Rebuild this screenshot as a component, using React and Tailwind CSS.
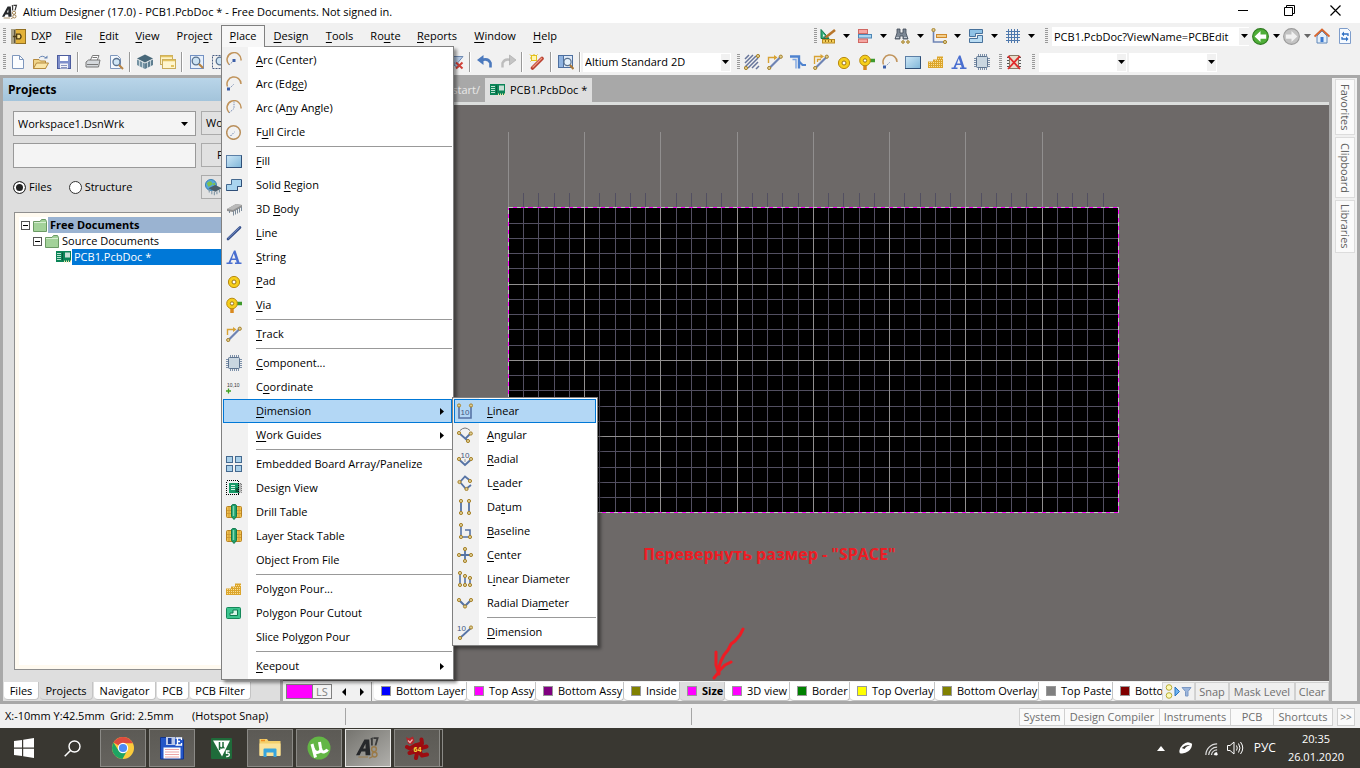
import React from "react";

/* ---------- small helpers ---------- */

function Mnemonic({ text }) {
  const at = text.indexOf("_");
  if (at < 0) return <span>{text}</span>;
  return (
    <span>
      {text.slice(0, at)}
      <u className="underline underline-offset-2 decoration-1">{text[at + 1]}</u>
      {text.slice(at + 2)}
    </span>
  );
}

function Svg({ children, size = "size-4", box = "0 0 16 16", className = "" }) {
  return (
    <svg viewBox={box} className={`${size} shrink-0 ${className}`} fill="none" aria-hidden="true">
      {children}
    </svg>
  );
}

const Caret = ({ color = "#000" }) => (
  <svg viewBox="0 0 7 4" className="h-1 w-[7px] shrink-0" aria-hidden="true">
    <path d="M0 0H7L3.5 4Z" fill={color} />
  </svg>
);

const N = ({ x, y, r = 1.6 }) => <circle cx={x} cy={y} r={r} fill="#dccb8f" stroke="#a8832c" />;
const ST = "#5673a5";

/* ---------- icons ---------- */

const icons = {
  arcCenter: (
    <Svg>
      <path d="M3 12.500A7 7 0 1 1 15 8.500" stroke="#c0935a" strokeWidth="1.500" />
      <path d="M3 13L7.500 9" stroke="#7b8fb5" strokeDasharray="1.5 1" />
      <rect x="6.500" y="7" width="3" height="3" fill="#3c5fa8" />
    </Svg>
  ),
  arcEdge: (
    <Svg>
      <path d="M1.500 10.500A7 7 0 1 1 15 8" stroke="#c0935a" strokeWidth="1.500" />
      <path d="M3 13L8 8" stroke="#7b8fb5" strokeDasharray="1.5 1" />
      <rect x="1" y="11.500" width="3" height="3" fill="#3c5fa8" />
    </Svg>
  ),
  arcAny: (
    <Svg>
      <path d="M3 12.500A7 7 0 1 1 15 8.500" stroke="#c0935a" strokeWidth="1.500" />
      <path d="M3 13L8 8.500V1.500" stroke="#7b8fb5" strokeDasharray="1.5 1" />
    </Svg>
  ),
  circle: (
    <Svg>
      <circle cx="7.500" cy="8.500" r="6.800" stroke="#b98f5b" strokeWidth="1.500" />
      <path d="M4.500 12L8.500 8" stroke="#5d76a8" strokeDasharray="1.5 1" />
    </Svg>
  ),
  fill: (
    <Svg>
      <defs>
        <linearGradient id="gFill" x1="0" y1="0" x2="1" y2="1">
          <stop offset="0" stopColor="#cfe8f7" />
          <stop offset="1" stopColor="#7fb6d9" />
        </linearGradient>
      </defs>
      <rect x=".5" y="2.500" width="15" height="12" fill="url(#gFill)" stroke="#5c7fa6" />
      <path d="M0 14.500H15.500V2.500" stroke="#2f4f78" />
    </Svg>
  ),
  region: (
    <Svg>
      <path d="M5.500 2.500H15.500V9.500H11.500V13.500H.5V7.500H5.500Z" fill="#a9d4ee" stroke="#44698f" />
      <path d="M.5 13.500H11.500V9.500H15.500V3" stroke="#2f4f78" />
    </Svg>
  ),
  body: (
    <Svg>
      <path d="M1 8L10 3L16 4V6L7 11L1 10Z" fill="#8f8f8f" />
      <path d="M1 8L10 3L16 4L7 9Z" fill="#b9b9b9" />
      <path d="M7.500 10V14.500M9.500 9V13.500M11.500 8V12.500M13.500 7V11.500M15.500 6V10M3.500 10V12" stroke="#7d8c9a" />
    </Svg>
  ),
  line: (
    <Svg>
      <path d="M2 14L14 2.500" stroke="#35508c" strokeWidth="2.600" strokeLinecap="round" />
      <path d="M2 13.500L13.500 2.500" stroke="#8aa0d0" strokeWidth=".8" />
    </Svg>
  ),
  string: (
    <Svg>
      <path
        fillRule="evenodd"
        d="M8 1.500H9.500L13.500 13.500H15.500V15H9V13.500H10.700L10 11H5.500L4.500 13.500H6.500V15H.5V13.500H2.500ZM7.700 4.500L6 9.500H9.500Z"
        fill="#4a6fd0"
      />
    </Svg>
  ),
  pad: (
    <Svg>
      <circle cx="8" cy="9" r="5.600" fill="#f6cf1b" stroke="#b98a10" />
      <circle cx="8" cy="9" r="2" fill="#fff" stroke="#9a7412" />
    </Svg>
  ),
  via: (
    <Svg>
      <path d="M10 6.500H16" stroke="#3f9a2c" strokeWidth="3.500" />
      <path d="M6 10V16" stroke="#d9891e" strokeWidth="3.500" />
      <circle cx="6" cy="6.500" r="5.300" fill="#f6cf1b" stroke="#b98a10" />
      <circle cx="6" cy="6.500" r="1.700" fill="#fff" stroke="#9a7412" />
    </Svg>
  ),
  track: (
    <Svg>
      <path d="M1.500 9V3.500H8.500" stroke="#d8a233" strokeWidth="1.400" />
      <path d="M7 1L10.500 3.500L7 6Z" fill="#d8a233" />
      <path d="M2.500 14L13.500 3" stroke="#6e84b4" strokeWidth="2.200" />
      <N x={13.8} y={2.7} />
      <N x={2.2} y={14} />
    </Svg>
  ),
  multi: (
    <Svg>
      <path d="M1.500 10V2.500H8M4.500 8V5.500H8" stroke="#d8a233" strokeWidth="1.300" />
      <path d="M7.500 0L11 2.500L7.500 5Z" fill="#d8a233" />
      <path d="M2.500 14L13.500 3" stroke="#6e84b4" strokeWidth="2.200" />
      <N x={13.8} y={2.7} />
      <N x={2.2} y={14} />
    </Svg>
  ),
  diff: (
    <Svg>
      <path d="M0 2.500H9V14.500" stroke="#4f83cf" strokeWidth="2.400" />
      <path d="M2.500 5.500H6V14.500" stroke="#7ea6e2" strokeWidth="1.400" />
      <path d="M9 7.500L12.500 11H16" stroke="#4f83cf" strokeWidth="2.200" />
    </Svg>
  ),
  hatch: (
    <Svg>
      <path d="M1 5L5 1M1 9L9 1M1 13L12 2M4 14L14 4M8 14L14 8M12 15L15 12" stroke="#66749a" strokeWidth="1.500" />
      <N x={14} y={2} />
      <N x={2} y={14} />
    </Svg>
  ),
  chip: (
    <Svg>
      <path
        d="M4.500 0V16M6.500 0V16M8.500 0V16M10.500 0V16M12.500 0V16M0 4.500H16M0 6.500H16M0 8.500H16M0 10.500H16M0 12.500H16"
        stroke="#6e84a0"
        strokeWidth=".9"
      />
      <rect x="2.500" y="2.500" width="11" height="11" rx="1" fill="#c9d6e0" stroke="#5f7590" />
    </Svg>
  ),
  coord: (
    <Svg>
      <path d="M0 12H5M2.500 9.500V14.500" stroke="#3fa320" strokeWidth="1.300" />
      <text x="1" y="8" fontSize="5" fontFamily="Liberation Sans, sans-serif" fill="#333">
        10,10
      </text>
    </Svg>
  ),
  array: (
    <Svg>
      {[
        [0.5, 0.5],
        [9.5, 0.5],
        [0.5, 9.5],
        [9.5, 9.5],
      ].map(([x, y]) => (
        <rect key={`${x}-${y}`} x={x} y={y} width="6" height="6" fill="#a9d0ea" stroke="#44698f" />
      ))}
    </Svg>
  ),
  designView: (
    <Svg>
      <rect x="12" y="3.500" width="3.500" height="9" fill="#b5b5b5" stroke="#777" strokeDasharray="1 1" />
      <rect x="3" y="3" width="10" height="10" fill="#199a68" />
      <path d="M5 5.500H9M5 7.500H9M5 9.500H9" stroke="#d5f0e4" />
      <rect x="9.500" y="8" width="3" height="4" fill="#0c5c3d" />
      <rect x=".5" y=".5" width="12" height="14" stroke="#000" strokeDasharray="1 1" shapeRendering="crispEdges" />
    </Svg>
  ),
  drill: (
    <Svg>
      <rect x=".5" y="2.500" width="15" height="11" rx="1" fill="#f0c04c" stroke="#b98323" />
      <path d="M1 6.500H15M1 9.500H15M3 3V13M13 3V13" stroke="#d09a34" />
      <path d="M5.500 1.500Q5.500 .5 8 .5T10.500 1.500V12.500L8 15.500L5.500 12.500Z" fill="#22a06b" stroke="#107a4c" />
      <path d="M7.500 2V12" stroke="#7ed8ae" strokeWidth="1.500" />
    </Svg>
  ),
  poly: (
    <Svg>
      <path d="M9 2.500H15V14H0V7.500H5V5.500H9Z" fill="#dca52c" />
      <path
        d="M1 8.500H15M1 10.500H15M1 12.500H15M7 6.500H15M10 4.500H15"
        stroke="#f8df96"
        strokeDasharray="1 1"
        shapeRendering="crispEdges"
      />
    </Svg>
  ),
  cutout: (
    <Svg>
      <rect x=".5" y="2.500" width="14" height="11" rx="1" fill="#3cc48e" stroke="#15885a" />
      <path d="M7 5H11.500V10.500H4V8H7Z" fill="#d8f5e8" stroke="#0f7a50" />
    </Svg>
  ),
  dLinear: (
    <Svg>
      <path d="M2 3V15H14V3" stroke={ST} strokeWidth="1.600" />
      <text x="3.500" y="12" fontSize="8" fontFamily="Liberation Sans, sans-serif" fill="#3f567f">
        10
      </text>
      <N x={2} y={2.5} />
      <N x={14} y={2.5} />
    </Svg>
  ),
  dAngular: (
    <Svg>
      <path d="M3 3.500Q8 -1.500 13 3.500" stroke="#777" />
      <path d="M2 6L10.500 13.500M9 11L14 6" stroke={ST} strokeWidth="1.800" />
      <N x={2} y={6} />
      <N x={13.8} y={6.5} />
      <N x={11} y={14} />
    </Svg>
  ),
  dRadial: (
    <Svg>
      <text x="3.500" y="6.500" fontSize="8" fontFamily="Liberation Sans, sans-serif" fill="#3f567f">
        10
      </text>
      <path d="M2 8.500L8 14L14 8.500" stroke={ST} strokeWidth="2" />
      <path d="M8 11V8" stroke="#999" />
      <N x={2} y={8} />
      <N x={14} y={8} />
    </Svg>
  ),
  dLeader: (
    <Svg>
      <path d="M13 5.500L8 1.500L3 7L9 14L14 10" stroke={ST} strokeWidth="1.800" />
      <N x={13} y={6} />
      <N x={2.5} y={7} />
      <N x={9.5} y={14} />
    </Svg>
  ),
  dDatum: (
    <Svg>
      <path d="M4 2V14M12 2V14" stroke={ST} strokeWidth="1.800" />
      <N x={4} y={2} />
      <N x={4} y={14} />
      <N x={12} y={2} />
      <N x={12} y={14} />
    </Svg>
  ),
  dBase: (
    <Svg>
      <path d="M4 2V14H13V7H8" stroke={ST} strokeWidth="1.600" />
      <N x={4} y={2} />
      <N x={4} y={14} />
      <N x={13} y={14} />
    </Svg>
  ),
  dCenter: (
    <Svg>
      <path d="M8 2V14M2 8H14" stroke={ST} strokeWidth="1.800" />
      <N x={8} y={2} />
      <N x={8} y={14} />
      <N x={2} y={8} />
      <N x={14} y={8} />
    </Svg>
  ),
  dLinDia: (
    <Svg>
      <path d="M3 2V14M8 5V14M13 8V14" stroke={ST} strokeWidth="1.600" />
      <N x={3} y={2} />
      <N x={3} y={14} />
      <N x={8} y={5} />
      <N x={8} y={14} />
      <N x={13} y={7} />
      <N x={13} y={14} />
    </Svg>
  ),
  dRadDia: (
    <Svg>
      <path d="M2 5L8 11L14 5" stroke={ST} strokeWidth="2" />
      <N x={2} y={5} />
      <N x={14} y={5} />
      <N x={8} y={11.5} />
    </Svg>
  ),
  dDim: (
    <Svg>
      <text x="0" y="6.500" fontSize="8" fontFamily="Liberation Sans, sans-serif" fill="#3f567f">
        10
      </text>
      <path d="M3 14L14 4" stroke={ST} strokeWidth="1.800" />
      <N x={14} y={3.5} />
      <N x={3} y={14} />
    </Svg>
  ),
  newDoc: (
    <Svg>
      <path d="M2.500 1.500H9.500L13.500 5.500V14.500H2.500Z" fill="#fbfdff" stroke="#7e97bd" />
      <path d="M9.500 1.500V5.500H13.500" stroke="#7e97bd" />
    </Svg>
  ),
  open: (
    <Svg>
      <path d="M.5 14.500V5.500H6L7.500 7H12.500V14.500Z" fill="#f0d488" stroke="#b58a3e" />
      <path d="M.5 14.500L3.500 9H15.500L12.500 14.500Z" fill="#fae6a8" stroke="#b58a3e" />
      <path d="M6 4Q9 .5 13 4" stroke="#6a87b5" />
      <path d="M11 4.500H14.500V1.500Z" fill="#6a87b5" />
    </Svg>
  ),
  save: (
    <Svg>
      <rect x="1.500" y="1.500" width="13" height="13" fill="#7f8fcb" stroke="#4c5c9e" />
      <rect x="4" y="2" width="8" height="5" fill="#fff" />
      <rect x="4" y="9.500" width="8" height="5" fill="#f3f3f8" />
      <path d="M5 11.500H11M5 13.500H11" stroke="#8a95bf" />
    </Svg>
  ),
  print: (
    <Svg>
      <path d="M5 7L7.500 1.500H14L12 7" fill="#fff" stroke="#7a7a7a" />
      <path d="M1 8L3.500 6H15L13.500 13H1Z" fill="#d4d8dc" stroke="#777" />
      <path d="M2 10.500H13M7.500 3.500H12" stroke="#777" />
    </Svg>
  ),
  preview: (
    <Svg>
      <path d="M2.500 1.500H9.500L12.500 4.500V14.500H2.500Z" fill="#f4f8fd" stroke="#7e97bd" />
      <circle cx="8.500" cy="8" r="3.500" fill="#cfe5f5" stroke="#58718f" strokeWidth="1.300" />
      <path d="M11 11L15 15" stroke="#b88444" strokeWidth="2" />
    </Svg>
  ),
  stack: (
    <Svg>
      <path d="M8 .5L16 4.500L8 8.500L0 4.500Z" fill="#476779" />
      <path d="M0 5.500L8 9.500V15L0 11Z" fill="#7593a3" />
      <path d="M16 5.500L8 9.500V15L16 11Z" fill="#5e7e90" />
      <path d="M2.500 6V13M5.500 7.500V14M10.500 7.500V14M13.500 6V13" stroke="#d5e2e9" strokeWidth=".8" />
    </Svg>
  ),
  windows: (
    <Svg>
      <rect x=".5" y="1.500" width="12" height="9" fill="#fdf3c7" stroke="#c9ac5c" />
      <path d="M1 2.500H12.500" stroke="#e3c25f" strokeWidth="1.500" />
      <rect x="2.500" y="5.500" width="13" height="9" fill="#fff6cf" stroke="#c9ac5c" />
      <path d="M3 6.500H15" stroke="#e3c25f" strokeWidth="1.500" />
      <rect x="11" y="11" width="3" height="2" fill="#e3c25f" />
    </Svg>
  ),
  zoomDoc: (
    <Svg>
      <rect x="1.500" y="1.500" width="13" height="13" fill="#e7f0fb" stroke="#7391c2" />
      <circle cx="7" cy="7" r="3.800" fill="#cbe2f3" stroke="#58718f" strokeWidth="1.300" />
      <path d="M10 10L14 14" stroke="#b88444" strokeWidth="2.200" />
    </Svg>
  ),
  zoomArea: (
    <Svg>
      <rect x=".5" y="1.500" width="14" height="13" stroke="#4a5e84" strokeDasharray="2 1" />
      <circle cx="8" cy="7" r="3.800" fill="#cbe2f3" stroke="#58718f" strokeWidth="1.300" />
      <path d="M11 10L15 14" stroke="#b88444" strokeWidth="2.200" />
    </Svg>
  ),
  clearFilter: (
    <Svg>
      <path d="M1 2.500H15L10 8.500V14L6 11V8.500Z" fill="#b7cbe6" stroke="#6e8ab3" />
      <path d="M8 8.500L14.500 14.500M14.500 8.500L8 14.500" stroke="#cf4037" strokeWidth="2" />
    </Svg>
  ),
  undo: (
    <Svg>
      <path d="M4 6.500Q11 3.500 13.500 9V13.500" stroke="#4b79bd" strokeWidth="2.600" />
      <path d="M0 6L6.500 1V11Z" fill="#4b79bd" />
    </Svg>
  ),
  redo: (
    <Svg>
      <path d="M12 6.500Q5 3.500 2.500 9V13.500" stroke="#bdbdbd" strokeWidth="2.400" />
      <path d="M16 6L9.500 1V11Z" fill="#c4c4c4" stroke="#a5a5a5" strokeWidth=".6" />
    </Svg>
  ),
  wand: (
    <Svg>
      <path d="M3.500 14L13 4.500" stroke="#b93f2f" strokeWidth="3.600" strokeLinecap="round" />
      <path d="M3.500 13.500L13 4" stroke="#ee9a83" strokeWidth="1.200" />
      <rect x="2.500" y="1.500" width="5" height="5" fill="#fff7b0" stroke="#e6c21c" />
      <path d="M5 0V1.500M1 4H2.500M1 .5L2.500 2M8.500 .5L7.500 1.500M1.500 7.500L2.500 6.500" stroke="#d9b512" />
    </Svg>
  ),
  browse: (
    <Svg>
      <rect x=".5" y="1.500" width="5" height="12" fill="#8fb3e0" stroke="#4d6f9f" />
      <rect x="5.500" y="1.500" width="9" height="12" fill="#dfe9f6" stroke="#4d6f9f" />
      <circle cx="9.500" cy="8" r="3.600" fill="#e6f2fb" stroke="#58718f" strokeWidth="1.200" />
      <path d="M12 11L15.500 15" stroke="#a97838" strokeWidth="2.200" />
    </Svg>
  ),
  chipX: (
    <Svg>
      <path d="M1 3.500H15M1 6.500H15M1 9.500H15M1 12.500H15" stroke="#555" />
      <rect x="3.500" y="1.500" width="9" height="13" fill="#e8dccb" stroke="#8a7a66" />
      <path d="M2 2L14 15M14 2L2 15" stroke="#e12b2b" strokeWidth="1.800" />
    </Svg>
  ),
  ruler: (
    <Svg>
      <path d="M1 1.500V10.500H9Z" fill="#37b07c" stroke="#127a4c" />
      <path d="M3 6V8.500H5.500Z" fill="#f1f1f1" />
      <path d="M5.500 9.500L15 2" stroke="#b8762a" strokeWidth="2.600" />
      <path d="M3.500 10.500L5.500 8" stroke="#555" />
      <rect x="2.500" y="11.500" width="12" height="3.500" fill="#f3ce5b" stroke="#b98a21" />
      <path d="M5.500 12V14M8.500 12V14M11.500 12V14" stroke="#9a6f14" />
    </Svg>
  ),
  align: (
    <Svg>
      <rect x="1.500" y="1.500" width="9" height="4" fill="#f5a6a2" stroke="#d06863" />
      <rect x="1.500" y="6.500" width="13" height="3.500" fill="#a9d4f0" stroke="#4d86b5" />
      <rect x="1.500" y="11" width="9" height="3.500" fill="#f5a6a2" stroke="#d06863" />
    </Svg>
  ),
  binoculars: (
    <Svg>
      <path d="M3 1H6V5H9V1H12V5L14 11H9V8H6V11H1L3 5Z" fill="#7d8894" stroke="#3c4654" strokeWidth=".8" />
      <path d="M2 9.500H5M10 9.500H13" stroke="#c5ccd4" />
      <N x={9} y={14} r={1.3} />
      <N x={14} y={14} r={1.3} />
    </Svg>
  ),
  dimTool: (
    <Svg>
      <path d="M2.500 2V14H14" stroke="#6e84b4" strokeWidth="1.600" />
      <rect x="5.500" y="6.500" width="10" height="3" fill="#f3ce8b" stroke="#cf8a2c" />
      <N x={2.5} y={2} />
      <N x={14} y={14} />
    </Svg>
  ),
  rooms: (
    <Svg>
      <path d="M1.500 1.500H14.500V5.500H7.500V8.500H1.500Z" fill="#8fc2e6" stroke="#47719b" />
      <path d="M14.500 7.500V14.500H1.500V10.500H9.500V7.500Z" fill="#b9dcf3" stroke="#47719b" />
    </Svg>
  ),
  grid: (
    <Svg>
      <path d="M1 3.500H15M1 6.500H15M1 9.500H15M1 12.500H15M3.500 1V15M6.500 1V15M9.500 1V15M12.500 1V15" stroke="#4f79ad" />
    </Svg>
  ),
  back: (
    <Svg size="size-[17px]">
      <circle cx="8" cy="8" r="7.400" fill="#4fae38" stroke="#2d7a1e" />
      <path d="M2.500 8L8 2.800V6H13.300V10H8V13.200Z" fill="#fff" />
    </Svg>
  ),
  forward: (
    <Svg size="size-[17px]">
      <circle cx="8" cy="8" r="7.400" fill="#c3c3c3" stroke="#9b9b9b" />
      <path d="M13.500 8L8 2.800V6H2.700V10H8V13.200Z" fill="#f1f1f1" />
    </Svg>
  ),
  home: (
    <Svg>
      <path d="M3 8V15H13V8L8 3Z" fill="#e3effa" stroke="#5f86b8" />
      <path d="M.5 8.500L8 1.500L15.500 8.500" stroke="#d8652d" strokeWidth="1.800" />
      <rect x="6.500" y="9" width="3" height="5" fill="#3b79cf" />
    </Svg>
  ),
  refresh: (
    <Svg>
      <path d="M2.500 .5H10.500L13.500 3.500V15.500H2.500Z" fill="#f5faff" stroke="#7e9dcb" />
      <path d="M6 6H11V8M10 11H5V9" stroke="#2e70c4" strokeWidth="1.300" />
      <path d="M7 3.500V8.500L4.500 6ZM9 8.500V13.500L11.500 11Z" fill="#2e70c4" />
    </Svg>
  ),
  pcb: (
    <Svg>
      <rect x="0" y="2" width="15" height="11" fill="#0b8457" />
      <rect x="6" y="3.500" width="1" height="8" fill="#0a5c3c" />
      <rect x="9" y="3.500" width="5" height="5" fill="#c8dfd5" />
      <path d="M1 4.500H5M1 6.500H5M1 8.500H5M1 10.500H5" stroke="#cfeee0" strokeWidth=".9" />
      <path d="M8 12.500H15" stroke="#f3e7ae" strokeDasharray="1 1" strokeWidth="2" />
    </Svg>
  ),
};

function GlobeChip() {
  return (
    <Svg size="size-[17px]" box="0 0 20 20">
      <circle cx="7" cy="7" r="6.500" fill="#54a6dc" stroke="#2d79ad" />
      <path d="M2 5Q6 1 8 4T4 9ZM8 6L12 4V8Z" fill="#7cc04f" />
      <path d="M12 7L20 11L12 15L4 11Z" fill="#4a5d6b" />
      <path d="M5 12V16M8 14V18M11 15V19M14 14.500V18M17 13V16" stroke="#8096a5" strokeWidth="1.300" />
    </Svg>
  );
}

function Folder() {
  return (
    <Svg size="h-[13px] w-[15px]" box="0 0 15 13">
      <path d="M.5 12.500V2.500H7L8.500 .5H12.500L13.500 2.500V12.500Z" fill="#a3d29a" stroke="#6a9a64" />
      <path d="M1 3.500H13" stroke="#d7efd2" />
    </Svg>
  );
}

function AltiumMark({ className = "" }) {
  return (
    <svg viewBox="0 0 20 20" className={className} aria-hidden="true">
      <path fillRule="evenodd" d="M0 16L7 3H11L12 16H8L7.800 13H4.500L3 16ZM6 10.500H8L7.900 6.500Z" fill="#26282b" />
      <path d="M12 2L14 1V8H12.500V3.500ZM14.500 1H19L17 8H15.500L17 2.500H14.500Z" fill="#3a3a3a" />
      <circle cx="15" cy="11" r="2" fill="none" stroke="#9a7a48" strokeWidth="1.200" />
      <circle cx="15.500" cy="15.500" r="2" fill="none" stroke="#9a7a48" strokeWidth="1.200" />
      <path d="M2 17.500H10M11 18.500L14 17" stroke="#9a7a48" />
    </svg>
  );
}

/* ---------- toolbars ---------- */

const Handle = () => (
  <svg viewBox="0 0 3 16" className="h-4 w-[3px] shrink-0" shapeRendering="crispEdges" aria-hidden="true">
    <path d="M1.500 0V16" stroke="#999" strokeWidth="3" strokeDasharray="1 1" />
  </svg>
);
const Sep = () => <span className="mx-[2px] h-5 w-[2px] shrink-0 border-r border-l border-r-white border-l-[#999]" />;

function Tool({ name, label }) {
  return (
    <button type="button" aria-label={label || name} className="flex h-6 w-[23px] shrink-0 items-center justify-center">
      {icons[name]}
    </button>
  );
}

function DropTool({ name, label }) {
  return (
    <button type="button" aria-label={label || name} className="flex h-6 w-[37px] shrink-0 items-center gap-[7px] pl-[3px]">
      {icons[name]}
      <Caret />
    </button>
  );
}

function Combo({ label, value, width }) {
  return (
    <span className={`relative flex h-[19px] shrink-0 items-center bg-white ${width}`}>
      <select aria-label={label} className="h-full w-full appearance-none bg-transparent pl-[2px] outline-none" defaultValue={value}>
        <option>{value}</option>
      </select>
      <span className="pointer-events-none absolute inset-y-px right-px flex w-[9px] items-center justify-center bg-[#f1f1f1]">
        <Caret />
      </span>
    </span>
  );
}

const placeMenu = [
  { t: "_Arc (Center)", i: "arcCenter" },
  { t: "Arc (Edg_e)", i: "arcEdge" },
  { t: "Arc (A_ny Angle)", i: "arcAny" },
  { t: "F_ull Circle", i: "circle" },
  null,
  { t: "_Fill", i: "fill" },
  { t: "Solid _Region", i: "region" },
  { t: "3D _Body", i: "body" },
  { t: "_Line", i: "line" },
  { t: "_String", i: "string" },
  { t: "_Pad", i: "pad" },
  { t: "_Via", i: "via" },
  null,
  { t: "_Track", i: "track" },
  null,
  { t: "_Component...", i: "chip" },
  { t: "C_oordinate", i: "coord" },
  {
    t: "_Dimension",
    active: true,
    sub: [
      { t: "_Linear", i: "dLinear", active: true },
      { t: "_Angular", i: "dAngular" },
      { t: "_Radial", i: "dRadial" },
      { t: "L_eader", i: "dLeader" },
      { t: "Da_tum", i: "dDatum" },
      { t: "_Baseline", i: "dBase" },
      { t: "_Center", i: "dCenter" },
      { t: "L_inear Diameter", i: "dLinDia" },
      { t: "Radial Dia_meter", i: "dRadDia" },
      null,
      { t: "_Dimension", i: "dDim" },
    ],
  },
  { t: "_Work Guides", more: true },
  null,
  { t: "Embedded Board Array/Panelize", i: "array" },
  { t: "Design View", i: "designView" },
  { t: "Drill Table", i: "drill" },
  { t: "Layer Stack Table", i: "drill" },
  { t: "Object From File" },
  null,
  { t: "Poly_gon Pour...", i: "poly" },
  { t: "Polygon Pour Cutout", i: "cutout" },
  { t: "Slice Pol_ygon Pour" },
  null,
  { t: "_Keepout", more: true },
];

function MenuList({ items, className }) {
  return (
    <ul
      className={`absolute z-20 border border-[#808080] bg-white bg-linear-to-r from-[#f1f1f1] from-[26px] to-white to-[26px] p-px shadow-[3px_3px_3px_rgba(0,0,0,0.4)] ${className}`}
    >
      {items.map((m, k) =>
        m === null ? (
          <li key={k} className="flex h-[5px] items-center pl-[33px]" role="separator">
            <span className="h-px w-full bg-[#999]" />
          </li>
        ) : (
          <li key={k} className="relative">
            <button
              type="button"
              className={`flex h-6 w-full items-center border text-left ${
                m.active ? "border-[#0078d7] bg-[#b3d7f5]" : "border-transparent"
              }`}
            >
              <span className="flex w-8 shrink-0 items-center pl-[2px]">{m.i ? icons[m.i] : null}</span>
              <span className="grow whitespace-nowrap">
                <Mnemonic text={m.t} />
              </span>
              {(m.sub || m.more) && (
                <svg viewBox="0 0 4 7" className="mr-[7px] h-[7px] w-1" aria-hidden="true">
                  <path d="M0 0L4 3.500L0 7Z" fill="#000" />
                </svg>
              )}
            </button>
            {m.sub && <MenuList items={m.sub} className="-top-0.5 left-full w-[146px]" />}
          </li>
        )
      )}
    </ul>
  );
}

const menus = [
  ["_File", "w-[34px]"],
  ["_Edit", "w-9"],
  ["_View", "w-[41px]"],
  ["Proje_ct", "w-[53px]"],
  ["_Place", "w-11"],
  ["_Design", "w-[52px]"],
  ["_Tools", "w-[45px]"],
  ["Ro_ute", "w-[47px]"],
  ["_Reports", "w-14"],
  ["_Window", "w-[60px]"],
  ["_Help", "w-10"],
];

function TitleBar() {
  return (
    <header className="flex h-[23px] items-center bg-white">
      <AltiumMark className="ml-[2px] size-4 shrink-0" />
      <h1 className="ml-[5px] grow font-normal">Altium Designer (17.0) - PCB1.PcbDoc * - Free Documents. Not signed in.</h1>
      <div className="flex shrink-0 gap-[35px] pr-[19px] pb-[2px]">
        <button type="button" aria-label="Minimize">
          <Svg size="size-[11px]" box="0 0 11 11">
            <path d="M0 5.500H10" stroke="#000" />
          </Svg>
        </button>
        <button type="button" aria-label="Restore">
          <Svg size="size-[11px]" box="0 0 11 11">
            <path d="M.5 2.500H8.500V10.500H.5ZM2.500 2.500V.5H10.500V8.500H8.500" stroke="#000" />
          </Svg>
        </button>
        <button type="button" aria-label="Close">
          <Svg size="size-[11px]" box="0 0 11 11">
            <path d="M.5 .5L10.500 10.500M10.500 .5L.5 10.500" stroke="#000" strokeWidth="1.200" />
          </Svg>
        </button>
      </div>
    </header>
  );
}

function MenuBar() {
  return (
    <nav className="flex h-[26px] items-center bg-[#f1f1f1] pr-[7px] pl-[3px]">
      <Handle />
      <button type="button" className="flex h-[22px] w-[51px] shrink-0 items-center gap-[5px] pl-[5px]">
        <Svg size="size-[15px]">
          <rect x=".5" y=".5" width="15" height="15" fill="#e3b23a" stroke="#8d6b1c" />
          <path d="M0 0H5V16H0Z" fill="#a9a186" />
          <path d="M4 1V15" stroke="#3f3520" />
          <path d="M2 8H6M6 5.500H9.500Q12 8 9.500 10.500H6Z" fill="#f5dc8a" stroke="#4d3b12" strokeWidth="1.400" />
        </Svg>
        <Mnemonic text="D_XP" />
      </button>
      {menus.map(([t, w]) => {
        const open = t === "_Place";
        return (
          <div key={t} className={`relative shrink-0 ${w}`}>
            <button
              type="button"
              className={`relative flex h-[22px] w-full items-center justify-center border border-b-0 pb-px ${
                open ? "z-30 border-[#808080] bg-[#f7f7f7]" : "border-transparent"
              }`}
            >
              <Mnemonic text={t} />
            </button>
            {open && <MenuList items={placeMenu} className="top-full left-0 -mt-px w-[233px]" />}
          </div>
        );
      })}
      <div className="ml-auto flex items-center">
        <Handle />
        <DropTool name="ruler" />
        <DropTool name="align" />
        <DropTool name="binoculars" />
        <DropTool name="dimTool" />
        <DropTool name="rooms" />
        <DropTool name="grid" />
        <span className="ml-[6px] flex">
          <Handle />
        </span>
        <span className="ml-1 flex h-[19px] w-[197px] items-center overflow-hidden bg-white">
          <input aria-label="Document address" className="h-full min-w-0 grow px-[2px] outline-none" defaultValue="PCB1.PcbDoc?ViewName=PCBEdit" />
          <span className="flex h-[17px] w-[10px] shrink-0 items-center justify-center bg-[#f1f1f1]">
            <Caret />
          </span>
        </span>
        <button type="button" aria-label="Back" className="ml-[3px] flex items-center gap-1">
          {icons.back}
          <Caret />
        </button>
        <button type="button" aria-label="Forward" className="ml-[3px] flex items-center gap-1">
          {icons.forward}
          <Caret color="#666" />
        </button>
        <button type="button" aria-label="Home" className="ml-[3px]">
          {icons.home}
        </button>
        <button type="button" aria-label="Refresh" className="ml-[7px]">
          {icons.refresh}
        </button>
      </div>
    </nav>
  );
}

function ToolBar() {
  return (
    <div className="flex h-[26px] items-center bg-[#f1f1f1] pl-[3px]">
      <Handle />
      <Tool name="newDoc" />
      <Tool name="open" />
      <Tool name="save" />
      <Sep />
      <Tool name="print" />
      <Tool name="preview" />
      <Sep />
      <Tool name="stack" />
      <Tool name="windows" />
      <Sep />
      <Tool name="zoomDoc" />
      <Tool name="zoomArea" />
      <span className="w-[213px] shrink-0" />
      <Tool name="clearFilter" />
      <Sep />
      <Tool name="undo" />
      <Tool name="redo" />
      <Sep />
      <Tool name="wand" />
      <Sep />
      <Tool name="browse" />
      <Sep />
      <Combo label="View configuration" value="Altium Standard 2D" width="w-[148px]" />
      <span className="ml-[6px] flex">
        <Handle />
      </span>
      <Tool name="hatch" />
      <Tool name="track" />
      <Tool name="diff" />
      <Tool name="multi" />
      <Tool name="pad" />
      <Tool name="via" />
      <Tool name="arcEdge" />
      <Tool name="fill" />
      <Tool name="poly" />
      <Tool name="string" />
      <Tool name="chip" />
      <span className="ml-[6px] flex">
        <Handle />
      </span>
      <Tool name="chipX" />
      <span className="mr-1 ml-[7px] flex">
        <Handle />
      </span>
      <Combo label="Net" value="" width="w-[88px]" />
      <span className="ml-[2px] flex">
        <Combo label="Layer set" value="" width="w-[88px]" />
      </span>
    </div>
  );
}

/* ---------- projects panel ---------- */

const Expander = () => (
  <Svg size="size-[9px]" box="0 0 9 9">
    <rect x=".5" y=".5" width="8" height="8" fill="#fff" stroke="#555" />
    <path d="M2 4.500H7" stroke="#000" />
  </Svg>
);

function ModeRadio({ label, checked }) {
  return (
    <label className="flex items-center gap-[3px]">
      <input
        type="radio"
        name="mode"
        defaultChecked={checked}
        className="size-[13px] appearance-none rounded-full border border-[#333] bg-white checked:bg-[#222] checked:shadow-[inset_0_0_0_2px_white]"
      />
      {label}
    </label>
  );
}

function ProjectsPanel() {
  return (
    <aside className="flex w-[277px] shrink-0 flex-col bg-[#dedede]">
      <h2 className="flex h-[23px] items-center bg-linear-to-b from-[#b9d5e9] to-[#a3c4db] pl-[5px] text-xs font-bold">Projects</h2>
      <div className="grid grid-cols-[183px_68px] gap-x-[5px] gap-y-[7px] px-[10px] pt-[10px]">
        <span className="relative flex h-[25px]">
          <select aria-label="Workspace" className="w-full appearance-none border border-[#999] bg-[#f4f4f4] pl-1 outline-none" defaultValue="w">
            <option value="w">Workspace1.DsnWrk</option>
          </select>
          <span className="pointer-events-none absolute inset-y-0 right-2 flex items-center">
            <Caret />
          </span>
        </span>
        <button type="button" className="h-6 border border-[#ababab] bg-[#e1e1e1] pl-1 text-left">
          Workspace
        </button>
        <input aria-label="Project" className="h-[25px] border border-[#999] bg-[#f4f4f4] px-1 outline-none" />
        <button type="button" className="h-6 border border-[#ababab] bg-[#e1e1e1] pl-[15px] text-left">
          Project
        </button>
        <div className="flex items-center gap-[17px]">
          <ModeRadio label="Files" checked />
          <ModeRadio label="Structure" />
        </div>
        <button type="button" aria-label="Refresh structure" className="flex h-6 w-6 items-center justify-center border border-[#ababab] bg-[#e1e1e1]">
          <GlobeChip />
        </button>
      </div>
      <ul className="mx-[11px] mt-[13px] grow border border-[#8f8f8f] bg-[#fffaf0] p-1 *:bg-white">
        <li className="flex h-4 items-center pl-[2px]">
          <Expander />
          <span className="ml-[3px] flex">
            <Folder />
          </span>
          <b className="grow bg-[#9ab3d1] pl-[2px] leading-4">Free Documents</b>
        </li>
        <li className="flex h-4 items-center pl-[14px]">
          <Expander />
          <span className="ml-[3px] flex">
            <Folder />
          </span>
          <span className="pl-[2px] leading-4">Source Documents</span>
        </li>
        <li className="flex h-4 items-center pl-[37px]">
          {icons.pcb}
          <span className="grow bg-[#0078d7] pl-[2px] leading-4 text-white">PCB1.PcbDoc *</span>
        </li>
        <li className="h-[calc(100%-48px)]" aria-hidden="true" />
      </ul>
      <div className="mt-3 mb-px ml-px flex h-[18px] gap-px">
        {[
          ["Files", "w-[35px]"],
          ["Projects", "w-[53px]"],
          ["Navigator", "w-[62px]"],
          ["PCB", "w-8"],
          ["PCB Filter", "w-[61px]"],
        ].map(([t, w]) => (
          <button
            key={t}
            type="button"
            className={`rounded-b-sm border-r border-b border-[#c4c4c4] whitespace-nowrap ${w} ${t === "Projects" ? "bg-[#dedede]" : "bg-white"}`}
          >
            {t}
          </button>
        ))}
      </div>
    </aside>
  );
}

/* ---------- board editor ---------- */

const CELL = 15.25;
const columns = Array.from({ length: 40 }, (_, k) => Math.round(k * CELL - 0.1) + 0.5);
const rows = Array.from({ length: 20 }, (_, k) => Math.ceil(k * CELL) + 75.5);

function Board() {
  return (
    <svg
      viewBox="0 0 612 382"
      className="absolute top-[27px] left-[225px] h-[382px] w-[612px]"
      shapeRendering="crispEdges"
      role="img"
      aria-label="Board with placement grid"
    >
      <rect x="0" y="75" width="611" height="306" fill="#000" />
      {columns.map((x, k) => (k % 5 ? <path key={x} d={`M${x} 61V380`} stroke="#524f61" /> : null))}
      {rows.map((y, k) => (k % 5 ? <path key={y} d={`M0 ${y}H610`} stroke="#524f61" /> : null))}
      {columns.map((x, k) => (k % 5 ? null : <path key={x} d={`M${x} 0V380`} stroke="#918f8f" />))}
      {rows.map((y, k) => (k && k % 5 === 0 ? <path key={y} d={`M0 ${y}H610`} stroke="#918f8f" /> : null))}
      <rect x=".5" y="75.500" width="610" height="305" fill="none" stroke="#c4c4c4" />
      <rect x=".5" y="75.500" width="610" height="305" fill="none" stroke="#f0f" strokeDasharray="4 4" strokeDashoffset="4" />
    </svg>
  );
}

const layers = [
  ["Bottom Layer", "bg-[#0000ff]", "w-[93px]"],
  ["Top Assy", "bg-[#ff00ff]", "w-[69px]"],
  ["Bottom Assy", "bg-[#800080]", "w-[88px]"],
  ["Inside", "bg-[#808000]", "w-14"],
  ["Size", "bg-[#ff00ff]", "w-[45px]"],
  ["3D view", "bg-[#ff00ff]", "w-[65px]"],
  ["Border", "bg-[#008000]", "w-[60px]"],
  ["Top Overlay", "bg-[#ffff00]", "w-[85px]"],
  ["Bottom Overlay", "bg-[#808000]", "w-[104px]"],
  ["Top Paste", "bg-[#808080]", "w-[74px]"],
  ["Bottom Paste", "bg-[#800000]", "w-24"],
];

function Editor() {
  return (
    <main className="flex min-w-0 grow flex-col">
      <div className="flex h-6 items-center bg-[#a8a8a8]">
        <button type="button" className="h-6 w-[202px] pr-[5px] text-right text-[#e9e9e9]">
          https://start/
        </button>
        <button type="button" className="flex h-6 items-center gap-1 bg-[#dedede] px-[5px]">
          {icons.pcb}
          <span>PCB1.PcbDoc *</span>
        </button>
      </div>
      <div className="h-[3px] bg-[#dcdedd]" />
      <div className="relative grow overflow-hidden bg-[#6d6968]">
        <Board />
        <p className="absolute top-[437px] left-[360px] text-base leading-6 font-bold whitespace-nowrap text-[#ed1c24]">
          Перевернуть размер - "SPACE"
        </p>
        <svg viewBox="0 0 40 54" className="absolute top-[522px] left-[428px] h-[54px] w-10" fill="none" aria-hidden="true">
          <path
            d="M32 2L29 8L24 14L20 17L17 23L13 28L10 34L8 40L7 46L3 51M5 25V38L8 47L8 44L14 38L20 35"
            stroke="#ed1c24"
            strokeWidth="3"
            strokeLinecap="round"
            strokeLinejoin="round"
          />
        </svg>
      </div>
      <div className="flex h-5 items-stretch overflow-hidden bg-[#f1f1f1] pt-px">
        <button type="button" className="my-[2px] ml-[3px] flex w-[46px] shrink-0 items-center border border-[#808080] bg-[#f4f4f4] text-[#808080]">
          <span className="h-full w-[26px] border-r border-[#808080] bg-[#ff00ff]" />
          <span className="grow text-center">LS</span>
        </button>
        <button type="button" aria-label="Previous layer" className="ml-[9px] flex shrink-0 items-center">
          <Svg size="h-2 w-[6px]" box="0 0 6 8">
            <path d="M5 0V8L1 4Z" fill="#000" />
          </Svg>
        </button>
        <button type="button" aria-label="Next layer" className="ml-3 flex shrink-0 items-center">
          <Svg size="h-2 w-[6px]" box="0 0 6 8">
            <path d="M1 0V8L5 4Z" fill="#000" />
          </Svg>
        </button>
        <span className="mr-[2px] ml-[6px] w-px shrink-0 bg-[#999]" />
        <div className="flex min-w-0 grow overflow-hidden">
          {layers.map(([t, c, w]) => (
            <button
              key={t}
              type="button"
              className={`flex shrink-0 items-center gap-[5px] rounded-b-sm border-r border-b border-[#c4c4c4] pl-[7px] whitespace-nowrap ${w} ${
                t === "Size" ? "bg-[#dedede] font-bold" : "bg-white"
              }`}
            >
              <span className={`size-[10px] shrink-0 border border-[#999] ${c}`} />
              {t}
            </button>
          ))}
        </div>
        <button type="button" aria-label="Filter" className="flex w-[33px] shrink-0 items-center justify-center border border-[#d4d4d4]">
          <Svg size="h-[15px] w-[27px]" box="0 0 27 15">
            <circle cx="4" cy="3.500" r="2.800" fill="#fcfab8" stroke="#b8ab35" />
            <circle cx="4" cy="11.500" r="2.800" fill="#fcfab8" stroke="#b8ab35" />
            <path d="M10 3L14.500 7.500L10 12Z" fill="#6db2f0" stroke="#2873bf" />
            <path d="M17 3.500H26L23 7.500V12H20.500V7.500Z" fill="#9cb6dc" stroke="#7c99c5" />
          </Svg>
        </button>
        {[
          ["Snap", "w-[34px]"],
          ["Mask Level", "w-[66px]"],
          ["Clear", "w-[34px]"],
        ].map(([t, w]) => (
          <button key={t} type="button" className={`shrink-0 border border-[#d0d0d0] bg-[#efefef] leading-4 whitespace-nowrap text-[#6e6e6e] ${w}`}>
            {t}
          </button>
        ))}
      </div>
    </main>
  );
}

function SideTabs() {
  return (
    <aside className="mr-[3px] ml-[3px] flex w-[25px] shrink-0 flex-col items-center gap-[2px] bg-[#f0f0f0] pt-px">
      {[
        ["Favorites", "h-14"],
        ["Clipboard", "h-[61px]"],
        ["Libraries", "h-[53px]"],
      ].map(([t, h]) => (
        <button
          key={t}
          type="button"
          className={`flex w-5 items-center justify-center border border-[#dcdcdc] bg-[#fafafa] text-[#5f5f5f] [writing-mode:vertical-rl] ${h}`}
        >
          {t}
        </button>
      ))}
    </aside>
  );
}

function StatusBar() {
  return (
    <footer className="flex h-6 items-center bg-[#f0f0f0] pr-[5px] pl-[5px]">
      <span className="w-[105px] whitespace-nowrap">X:-10mm Y:42.5mm</span>
      <span className="w-[82px] whitespace-nowrap">Grid: 2.5mm</span>
      <span className="w-[153px] whitespace-nowrap">(Hotspot Snap)</span>
      <span className="h-[17px] w-[347px] border-x border-[#a5a5a5]" />
      <div className="mt-px ml-auto flex h-[18px] border border-[#d0d0d0] bg-[#fafafa] text-[#6e6e6e]">
        {[
          ["System", "w-11"],
          ["Design Compiler", "w-[95px]"],
          ["Instruments", "w-[71px]"],
          ["PCB", "w-[43px]"],
          ["Shortcuts", "w-[59px]"],
        ].map(([t, w], k) => (
          <button key={t} type="button" className={`whitespace-nowrap ${w} ${k ? "border-l border-[#d0d0d0]" : ""}`}>
            {t}
          </button>
        ))}
      </div>
      <button type="button" className="mt-px ml-1 h-[18px] w-[18px] border border-[#d0d0d0] bg-[#fafafa] text-[10px] leading-4 text-[#6e6e6e]">
        &gt;&gt;
      </button>
    </footer>
  );
}

/* ---------- taskbar ---------- */

function Task({ label, active, plain, children }) {
  const look = plain
    ? "border-transparent"
    : active
      ? "border-[#e6e6e4] bg-linear-to-br from-[#75746f] to-[#b0afab]"
      : "border-[#8b8a86] bg-linear-to-b from-[#5c5a55] to-[#65635e]";
  return (
    <button type="button" aria-label={label} className={`flex h-[38px] w-[46px] shrink-0 items-center justify-center border ${look}`}>
      {children}
    </button>
  );
}

function Taskbar() {
  return (
    <footer className="flex h-10 items-center bg-[#393731] text-white">
      <button type="button" aria-label="Start" className="flex w-12 justify-center">
        <Svg size="size-5" box="0 0 20 20">
          <path d="M0 3L8 2V9.500H0ZM9.200 1.800L20 0V9.500H9.200ZM0 10.700H8V18L0 17ZM9.200 10.700H20V20L9.200 18.300Z" fill="#fff" />
        </Svg>
      </button>
      <button type="button" aria-label="Search" className="mr-1 flex w-12 justify-center">
        <Svg size="size-[17px]" box="0 0 17 17">
          <circle cx="10.500" cy="6.500" r="5.500" stroke="#fff" strokeWidth="1.400" />
          <path d="M6.500 10.500L.7 16.300" stroke="#fff" strokeWidth="1.500" />
        </Svg>
      </button>
      <div className="flex gap-[3px]">
        <Task label="Chrome">
          <Svg size="size-6" box="0 0 24 24">
            <circle cx="12" cy="12" r="11" fill="#fbcb3c" />
            <path d="M12 12L2.500 6.500A11 11 0 0 1 21.500 6.500L21.800 7.200H12Z" fill="#dd4b3e" />
            <path d="M2.500 6.500A11 11 0 0 0 11.500 23L16.200 14.400L12 12L7.500 14.500Z" fill="#1ea463" />
            <circle cx="12" cy="12" r="5.200" fill="#fff" />
            <circle cx="12" cy="12" r="4.100" fill="#4c8bf5" />
          </Svg>
        </Task>
        <Task label="File manager">
          <Svg size="size-6" box="0 0 24 24">
            <path d="M.5 1.500H21L23.500 4V23H.5Z" fill="#2456c7" stroke="#12348c" />
            <rect x="6" y="1" width="9" height="8" fill="#bcc9e8" />
            <rect x="8" y="2" width="3.500" height="6" fill="#1b3f9c" />
            <path d="M15.500 2H21.500V4M15.500 9H21.500V7M17.500 2V9M17.500 5.500H20" stroke="#fff" strokeWidth="1.300" />
            <rect x="3.500" y="11.500" width="17" height="11" fill="#fff" />
            <path d="M5 13.500H19M5 16H19M5 18.500H19M5 21H19" stroke="#eda5a5" />
          </Svg>
        </Task>
        <Task label="WinMachine" plain>
          <Svg size="size-[21px]" box="0 0 21 21">
            <rect width="21" height="21" rx="1" fill="#1f6b3a" />
            <path d="M2 2.500H19L11 18.500Z" fill="#fff" />
            <path d="M8.500 4V12M8.500 8.500Q9 10 10.500 10T12 8V4M12 8Q12.200 10 13.500 10" stroke="#1f6b3a" strokeWidth="1.500" />
            <path d="M18.500 13H15.500V15.200Q18.300 14.800 18.300 16.800T15.200 18.500" stroke="#fff" strokeWidth="1.400" />
          </Svg>
        </Task>
        <Task label="Explorer">
          <Svg size="size-[22px]" box="0 0 22 22">
            <path d="M.5 18V2H8L9.500 4H21.500V18Z" fill="#f3cf6b" />
            <path d="M.5 6.500H21.500V19H.5Z" fill="#fbe39a" />
            <path d="M2 3.500H6" stroke="#f08c1f" strokeWidth="1.500" />
            <path d="M4.500 20V12.500Q4.500 11.500 5.500 11.500H16.500Q17.500 11.500 17.500 12.500V20H14.500V15.500H7.500V20Z" fill="#38a5dd" />
          </Svg>
        </Task>
        <Task label="uTorrent">
          <Svg size="size-6" box="0 0 24 24">
            <circle cx="12" cy="12" r="11.500" fill="#63b645" />
            <path d="M5 8L8.500 21.500M6.200 12.500Q7.500 17 11 16.300T13.500 12L12.500 6M13.500 12Q14.500 16.500 17 16T20.500 13.500" stroke="#fff" strokeWidth="3" />
          </Svg>
        </Task>
        <Task label="Altium Designer" active>
          <AltiumMark className="size-6" />
        </Task>
        <Task label="Red figure 64">
          <Svg size="size-6" box="0 0 24 24">
            <path
              d="M11 9L5 12.500L2 11M12 9L17 7.500L16.500 3.500M16 12L21.500 10.500M14.500 16L17 19.500L22 18.500M10 15.500L4.500 17M12 17L11 22"
              stroke="#9c0c11"
              strokeWidth="4"
              strokeLinecap="round"
              strokeLinejoin="round"
            />
            <circle cx="12.500" cy="13" r="5" fill="#9c0c11" />
            <path d="M1 1L4 2.500L8 .5L9.500 5L7 8.500L3 7.500Z" fill="#b5252a" />
            <path d="M3 4.500L5 6.500L7.500 3.500" stroke="#f0b4b4" strokeWidth="1.200" />
            <text x="8.500" y="15.500" fontSize="7" fontWeight="700" fontFamily="Liberation Sans, sans-serif" fill="#ffe23a">
              64
            </text>
          </Svg>
        </Task>
      </div>
      <span className="h-[38px] w-[3px] border-y border-r border-[#8b8a86]" />
      <div className="ml-auto flex items-center pr-[16px]">
        <button type="button" aria-label="Hidden icons">
          <Svg size="h-[5px] w-2" box="0 0 8 5">
            <path d="M4 0L8 5H0Z" fill="#fff" />
          </Svg>
        </button>
        <Svg size="size-[15px]" className="ml-[13px]">
          <path d="M2 13Q0 9 5 4T15 3Q15 8 11 11T2 13Z" fill="#fff" />
          <path d="M4 7.500Q8 3.500 13 4.500Q9 5 7 8.500Z" fill="#393731" />
        </Svg>
        <Svg size="size-[15px]" className="ml-[11px]">
          <path d="M2 15A12 12 0 0 1 14 3M5 15A9 9 0 0 1 14 6.500M8 15A6 6 0 0 1 14 9.500M11 15A3 3 0 0 1 14 12.500" stroke="#ddd" strokeWidth="1.300" />
          <circle cx="13" cy="14" r="1.500" fill="#fff" />
        </Svg>
        <Svg size="h-4 w-[18px]" box="0 0 18 16" className="ml-[7px]">
          <path d="M1.500 5.500H4L8 2V14L4 10.500H1.500Z" stroke="#fff" />
          <path d="M10.500 5.500Q12 8 10.500 10.500M12.500 3.500Q15.500 8 12.500 12.500M14.500 2Q19 8 14.500 14" stroke="#fff" />
        </Svg>
        <span className="ml-[10px] text-xs">РУС</span>
        <div className="ml-3 text-center leading-[18px]">
          20:35
          <br />
          26.01.2020
        </div>
      </div>
    </footer>
  );
}

export default function App() {
  return (
    <div className="flex min-h-screen flex-col bg-[#a8a8a8] font-['Open_Sans','Noto_Sans',sans-serif] text-[11px] leading-4 text-black">
      <TitleBar />
      <MenuBar />
      <ToolBar />
      <div className="flex min-h-[400px] grow pt-[3px] pl-[3px]">
        <ProjectsPanel />
        <div className="w-[3px] shrink-0" />
        <Editor />
        <SideTabs />
      </div>
      <div className="h-[3px] bg-[#a8a8a8]" />
      <StatusBar />
      <Taskbar />
    </div>
  );
}
